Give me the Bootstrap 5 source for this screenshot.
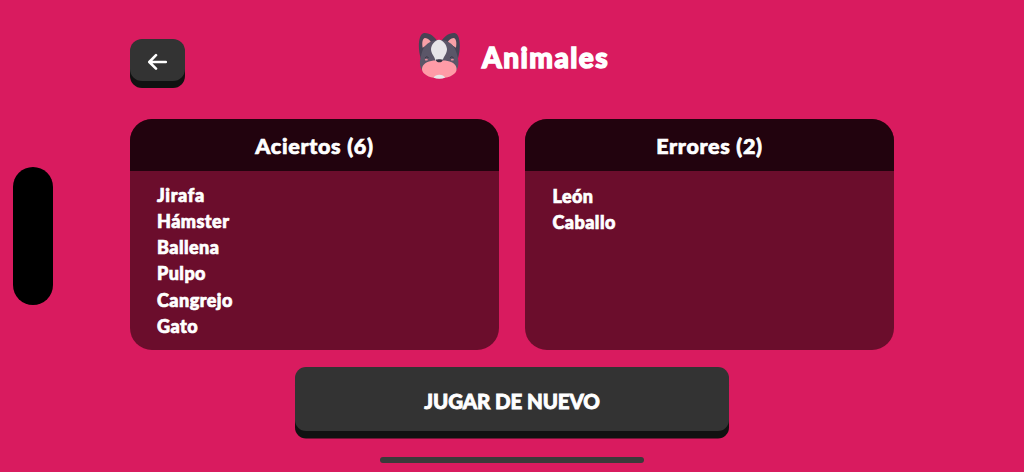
<!DOCTYPE html>
<html lang="es">
<head>
  <meta charset="UTF-8" />
  <meta name="viewport" content="width=device-width, initial-scale=1" />
  <title>Animales</title>
  <link href="https://cdn.jsdelivr.net/npm/bootstrap@5.3.0/dist/css/bootstrap.min.css" rel="stylesheet" />
  <style>
    body {
      height: 472px;
      background-color: #d91b5f;
      color: #fff;
      font-family: "Lato", "Open Sans", sans-serif;
      font-weight: 900;
      -webkit-text-stroke: 0.7px #fff;
    }
    .game {
      width: 764px;
      padding-top: 31px;
    }
    .topbar {
      height: 88px;
    }
    .key {
      background-color: #333;
      border: 0;
      color: #fff;
      font-weight: 900;
    }
    .key-back {
      width: 55px;
      height: 42px;
      margin-top: 8px;
      border-radius: 12px;
      box-shadow: 0 7px 0 #111;
    }
    .title {
      margin-left: 233px;
      gap: 20px;
    }
    .title h1 {
      font-size: 28px;
      line-height: 34px;
      margin-top: 9px;
      font-weight: 900;
      letter-spacing: 1.5px;
      -webkit-text-stroke-width: 1.4px;
    }
    .results {
      gap: 26px;
    }
    .panel {
      height: 231px;
      border-radius: 22px;
      background-color: #6b0d2c;
    }
    .panel h2 {
      height: 52px;
      line-height: 54px;
      background-color: #22030e;
      font-size: 21.5px;
      font-weight: 900;
      letter-spacing: 0.7px;
    }
    .words {
      padding: 10.5px 27px 0;
      font-size: 18px;
      line-height: 26.3px;
      letter-spacing: 0.45px;
    }
    .words li:first-child {
      letter-spacing: 0.7px;
    }
    .words-short {
      padding-top: 12px;
      padding-left: 27.5px;
    }
    .words-short li:first-child {
      letter-spacing: 0.4px;
    }
    .key-play {
      width: 434px;
      height: 64px;
      margin-top: 17px;
      border-radius: 11px;
      box-shadow: 0 7.5px 0 #111;
      font-size: 20.5px;
      letter-spacing: -0.1px;
      padding-top: 5px;
      -webkit-text-stroke: 0.8px #fff;
    }
    .notch {
      left: 13px;
      top: 167px;
      width: 40px;
      height: 138px;
      border-radius: 20px;
    }
    .home-bar {
      left: 380px;
      top: 457px;
      width: 264px;
      height: 6px;
      border-radius: 3px;
      background-color: #3a3a3a;
    }
  </style>
</head>
<body class="position-relative overflow-hidden">
  <div class="game mx-auto">
    <div class="topbar d-flex align-items-start">
      <button type="button" class="key key-back d-flex align-items-center justify-content-center p-0" aria-label="Volver">
        <svg width="22" height="20" viewBox="0 0 22 20" fill="none" stroke="#fff" stroke-width="2.6" stroke-linecap="round" stroke-linejoin="round">
          <path d="M18.8 12H2.6M9 5.2 2.3 12l6.7 6.6" />
        </svg>
      </button>
      <div class="title d-flex align-items-start">
        <svg width="44" height="49" viewBox="24 18 132 147">
          <!-- ears -->
          <path fill="#464354" d="M32 100C22 66 26 27 42 24c18-1 34 12 42 28zM144 100c10-34 6-73-10-76-18-1-34 12-42 28z" />
          <path fill="#f8a0a7" d="M38 68c-3-17 0-27 7-29 9 1 15 7 18 13zM138 68c3-17 0-27-7-29-9 1-15 7-18 13z" />
          <!-- head -->
          <path fill="#5b5668" d="M88 45c31 0 46 17 52 40 4 14 6 22 5 34-2 23-24 40-57 40s-55-17-58-40c-1-12 1-20 5-34 6-23 22-40 53-40z" />
          <path fill="#e6e5e8" d="M87 44c12 1 23 15 24 28 0 16-10 20-13 35H76c-2-15-13-19-13-35 1-13 12-27 24-28z" />
          <!-- muzzle -->
          <path fill="#ff9ba7" d="M88 107c15-1 27 0 37 5 12 6 17 16 14 26-6 14-27 22-51 22s-45-8-51-22c-3-10 2-20 14-26 10-5 22-6 37-5z" />
          <path fill="#e9e8e8" d="M71 158c2-6 9-9 17-9s15 3 17 9c-10 4-24 4-34 0z" />
          <path fill="#353141" d="M77 104c5-2 17-2 22 0-1 5-6 8-11 8s-10-3-11-8z" />
          <!-- eyes and cheeks -->
          <path fill="none" stroke="#353141" stroke-width="2.5" stroke-linecap="round" d="M46 98c2-4 7-4 9 0M121 98c2-4 7-4 9 0" />
          <ellipse cx="49" cy="104" rx="4.5" ry="2.5" fill="#e58c9c" />
          <ellipse cx="127" cy="104" rx="4.5" ry="2.5" fill="#e58c9c" />
        </svg>
        <h1 class="mb-0">Animales</h1>
      </div>
    </div>

    <div class="results d-flex">
      <div class="panel flex-fill w-50 overflow-hidden">
        <h2 class="text-center mb-0">Aciertos (6)</h2>
        <ul class="words list-unstyled mb-0">
          <li>Jirafa</li>
          <li>Hámster</li>
          <li>Ballena</li>
          <li>Pulpo</li>
          <li>Cangrejo</li>
          <li>Gato</li>
        </ul>
      </div>
      <div class="panel flex-fill w-50 overflow-hidden">
        <h2 class="text-center mb-0">Errores (2)</h2>
        <ul class="words words-short list-unstyled mb-0">
          <li>León</li>
          <li>Caballo</li>
        </ul>
      </div>
    </div>

    <button type="button" class="key key-play d-block mx-auto">JUGAR DE NUEVO</button>
  </div>

  <div class="notch position-absolute bg-black"></div>
  <div class="home-bar position-absolute"></div>

  <script src="https://cdn.jsdelivr.net/npm/bootstrap@5.3.0/dist/js/bootstrap.bundle.min.js"></script>
</body>
</html>
